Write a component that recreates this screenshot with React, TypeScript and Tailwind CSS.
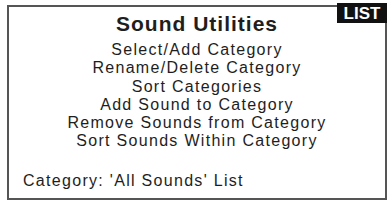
const items = [
  'Select/Add Category',
  'Rename/Delete Category',
  'Sort Categories',
  'Add Sound to Category',
  'Remove Sounds from Category',
  'Sort Sounds Within Category',
]

export default function App() {
  return (
    <div className="w-[390px] h-[201px] bg-white overflow-hidden font-['Liberation_Sans',Arial,sans-serif] text-[#1e1e1e]">
      <div className="relative ml-[7px] mt-[5px] w-[380px] h-[195px] border-2 border-[#555]">
        <div className="absolute -top-[4px] -right-[2px] h-[20px] w-[50px] bg-[#111] flex items-center justify-center text-white text-[17px] font-bold leading-none">
          LIST
        </div>

        <div className="pt-[4px] text-center text-[21px] font-bold tracking-[1px] leading-[26px]">
          Sound Utilities
        </div>

        <div className="mt-[4px] flex flex-col items-center">
          {items.map((t) => (
            <div key={t} className="text-[16px] leading-[18.3px] tracking-[1.3px]">
              {t}
            </div>
          ))}
        </div>

        <div className="mt-[21px] pl-[14px] text-[16px] leading-[18px] tracking-[1.3px]">
          Category: 'All Sounds' List
        </div>
      </div>
    </div>
  )
}
